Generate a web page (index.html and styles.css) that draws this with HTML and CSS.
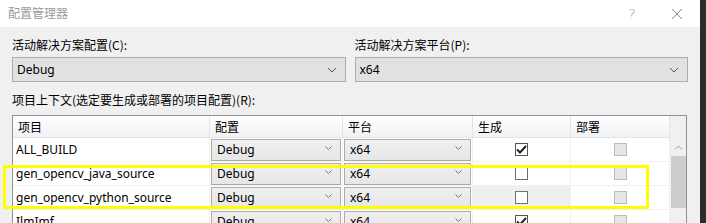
FILE: index.html
```html
<!DOCTYPE html>
<html lang="zh-CN">
<head>
<meta charset="utf-8">
<title>配置管理器</title>
<link rel="stylesheet" href="styles.css">
</head>
<body>
<div class="screen">
  <div class="dialog">
    <div class="titlebar">
      <span class="title">配置管理器</span>
      <span class="tb-btn help">?</span>
      <span class="tb-btn close">
        <svg width="12" height="12" viewBox="0 0 12 12"><path d="M1 1 L11 11 M11 1 L1 11" stroke="#8a8a8a" stroke-width="1" fill="none"/></svg>
      </span>
    </div>
    <div class="content">
      <div class="top-row">
        <div class="field">
          <div class="label">活动解决方案配置(C):</div>
          <div class="dropdown"><span>Debug</span><svg class="chev" width="10" height="6" viewBox="0 0 10 6"><path d="M1 1 L5 5 L9 1" stroke="#555" stroke-width="1" fill="none"/></svg></div>
        </div>
        <div class="field">
          <div class="label">活动解决方案平台(P):</div>
          <div class="dropdown"><span>x64</span><svg class="chev" width="10" height="6" viewBox="0 0 10 6"><path d="M1 1 L5 5 L9 1" stroke="#555" stroke-width="1" fill="none"/></svg></div>
        </div>
      </div>
      <div class="label ctx-label">项目上下文(选定要生成或部署的项目配置)(R):</div>
      <div class="table">
        <div class="grid">
          <div class="th">项目</div>
          <div class="th">配置</div>
          <div class="th">平台</div>
          <div class="th">生成</div>
          <div class="th">部署</div>

          <div class="td name">ALL_BUILD</div>
          <div class="td"><div class="combo"><span>Debug</span><svg class="cchev" width="7" height="4" viewBox="0 0 7 4"><path d="M0.5 0.5 L3.5 3.5 L6.5 0.5" stroke="#777" stroke-width="1" fill="none"/></svg></div></div>
          <div class="td"><div class="combo"><span>x64</span><svg class="cchev" width="7" height="4" viewBox="0 0 7 4"><path d="M0.5 0.5 L3.5 3.5 L6.5 0.5" stroke="#777" stroke-width="1" fill="none"/></svg></div></div>
          <div class="td center"><span class="cb checked"><svg width="11" height="9" viewBox="0 0 11 9"><path d="M1 4.5 L4 7.5 L10 1" stroke="#222" stroke-width="2" fill="none"/></svg></span></div>
          <div class="td center"><span class="cb disabled"></span></div>

          <div class="td name">gen_opencv_java_source</div>
          <div class="td"><div class="combo"><span>Debug</span><svg class="cchev" width="7" height="4" viewBox="0 0 7 4"><path d="M0.5 0.5 L3.5 3.5 L6.5 0.5" stroke="#777" stroke-width="1" fill="none"/></svg></div></div>
          <div class="td"><div class="combo"><span>x64</span><svg class="cchev" width="7" height="4" viewBox="0 0 7 4"><path d="M0.5 0.5 L3.5 3.5 L6.5 0.5" stroke="#777" stroke-width="1" fill="none"/></svg></div></div>
          <div class="td center"><span class="cb"></span></div>
          <div class="td center"><span class="cb disabled"></span></div>

          <div class="td name">gen_opencv_python_source</div>
          <div class="td"><div class="combo"><span>Debug</span><svg class="cchev" width="7" height="4" viewBox="0 0 7 4"><path d="M0.5 0.5 L3.5 3.5 L6.5 0.5" stroke="#777" stroke-width="1" fill="none"/></svg></div></div>
          <div class="td"><div class="combo"><span>x64</span><svg class="cchev" width="7" height="4" viewBox="0 0 7 4"><path d="M0.5 0.5 L3.5 3.5 L6.5 0.5" stroke="#777" stroke-width="1" fill="none"/></svg></div></div>
          <div class="td center focus"><span class="cb"></span></div>
          <div class="td center"><span class="cb disabled"></span></div>

          <div class="td name">IlmImf</div>
          <div class="td"><div class="combo"><span>Debug</span><svg class="cchev" width="7" height="4" viewBox="0 0 7 4"><path d="M0.5 0.5 L3.5 3.5 L6.5 0.5" stroke="#777" stroke-width="1" fill="none"/></svg></div></div>
          <div class="td"><div class="combo"><span>x64</span><svg class="cchev" width="7" height="4" viewBox="0 0 7 4"><path d="M0.5 0.5 L3.5 3.5 L6.5 0.5" stroke="#777" stroke-width="1" fill="none"/></svg></div></div>
          <div class="td center"><span class="cb checked"><svg width="11" height="9" viewBox="0 0 11 9"><path d="M1 4.5 L4 7.5 L10 1" stroke="#222" stroke-width="2" fill="none"/></svg></span></div>
          <div class="td center"><span class="cb disabled"></span></div>
        </div>
        <div class="scrollbar">
          <div class="sb-corner"></div>
          <div class="sb-up"><svg width="9" height="5" viewBox="0 0 9 5"><path d="M1 4.5 L4.5 1 L8 4.5" stroke="#999" stroke-width="1" fill="none"/></svg></div>
          <div class="sb-thumb"></div>
        </div>
      </div>
    </div>
    <div class="highlight"></div>
  </div>
  <div class="edge"></div>
</div>
</body>
</html>
```

FILE: styles.css
```css
html, body {
  margin: 0;
  padding: 0;
}
body {
  width: 706px;
  height: 223px;
  overflow: hidden;
  font-family: "Noto Sans", "Noto Sans CJK SC", sans-serif;
  font-size: 12px;
  color: #000;
}
.screen {
  display: flex;
  width: 706px;
  height: 223px;
}
.dialog {
  position: relative;
  width: 700px;
  height: 223px;
  background: #f0f0f0;
  overflow: hidden;
}
.edge {
  width: 6px;
  background: #2b2b2b;
}
.titlebar {
  height: 27px;
  background: #fff;
  display: flex;
  align-items: center;
  padding-left: 8px;
}
.title {
  font-family: "Noto Sans CJK SC", sans-serif;
  color: #9a9a9a;
  font-size: 12px;
  flex: 1;
  line-height: 16px;
  padding-bottom: 1px;
}
.tb-btn {
  color: #8a8a8a;
  display: flex;
  align-items: center;
  justify-content: center;
}
.help {
  font-size: 14px;
  width: 12px;
  margin-right: 33px;
  font-family: "DejaVu Sans", sans-serif;
  font-weight: 300;
  color: #9a9a9a;
}
.close {
  width: 12px;
  margin-right: 17px;
}
.content {
  padding: 10px 12px 0 12px;
}
.top-row {
  display: flex;
  gap: 9px;
}
.field {
  width: 333.5px;
}
.label {
  font-family: "Noto Sans CJK SC", sans-serif;
  line-height: 16px;
  height: 16px;
  white-space: nowrap;
}
.dropdown {
  margin-top: 4px;
  height: 23px;
  border: 1px solid #adadad;
  background: #e1e1e1;
  display: flex;
  align-items: center;
  justify-content: space-between;
  padding: 0 8px 0 4px;
}
.dropdown span {
  line-height: 16px;
}
.ctx-label {
  margin-top: 10px;
}
.table {
  margin-top: 7px;
  width: 673px;
  height: 120px;
  border: 1px solid #8e9197;
  border-bottom: none;
  background: #fff;
  display: flex;
}
.grid {
  display: grid;
  grid-template-columns: 197px 133px 130px 98px 99px;
  grid-template-rows: 22px repeat(4, 24px);
  align-content: start;
  background: #fff;
}
.th {
  font-family: "Noto Sans CJK SC", sans-serif;
  background: linear-gradient(#ffffff, #f1f2f4);
  border-right: 1px solid #e3e4e6;
  border-bottom: 1px solid #e3e4e6;
  padding-left: 5px;
  line-height: 21px;
}
.td {
  border-right: 1px solid #f0f0f0;
  border-bottom: 1px solid #f0f0f0;
  display: flex;
  align-items: center;
  padding: 0 1px;
  min-width: 0;
}
.td.name {
  padding-left: 3px;
}
.td.center {
  justify-content: center;
}
.td.focus {
  background: #efefef;
}
.combo {
  flex: 1;
  height: 20px;
  border: 1px solid #acacac;
  background: linear-gradient(#f0f0f0, #e6e6e6);
  display: flex;
  align-items: center;
  justify-content: space-between;
  padding: 0 8px 0 5px;
}
.cchev {
  margin-bottom: 3px;
}
.cb {
  width: 11px;
  height: 11px;
  border: 1px solid #707070;
  background: #fff;
  display: flex;
  align-items: center;
  justify-content: center;
}
.cb.checked {
  border-color: #555;
}
.cb.disabled {
  border-color: #bcbcbc;
  background: #e6e6e6;
}
.scrollbar {
  width: 17px;
  background: #f0f0f0;
  display: flex;
  flex-direction: column;
}
.sb-corner {
  height: 22px;
}
.sb-up {
  height: 18px;
  display: flex;
  align-items: center;
  justify-content: center;
}
.sb-thumb {
  height: 52px;
  margin: 0 0 0 1px;
  background: #cdcdcd;
}
.highlight {
  position: absolute;
  left: 3px;
  top: 165px;
  width: 640px;
  height: 38px;
  border: 3px solid #ffff00;
  pointer-events: none;
}
```
